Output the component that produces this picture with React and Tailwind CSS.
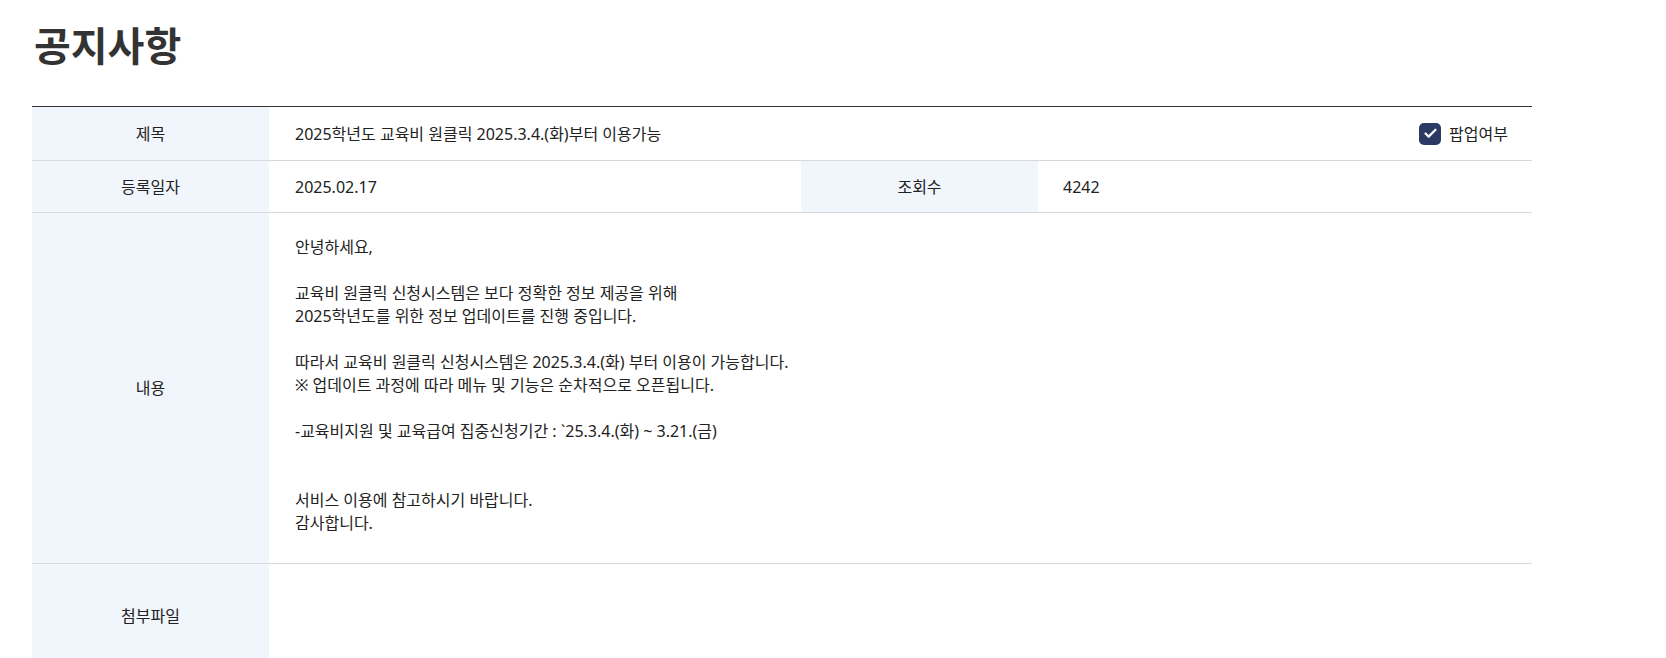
import { Check } from "lucide-react";

const font = { fontFamily: '"Noto Sans", "Noto Sans CJK KR", sans-serif' };

function Th({ children, className = "" }) {
  return (
    <div
      className={`w-[237px] shrink-0 bg-[#f1f5fc] flex items-center justify-center text-[16px] text-[#222] ${className}`}
    >
      {children}
    </div>
  );
}

const body = [
  "안녕하세요,",
  "",
  "교육비 원클릭 신청시스템은 보다 정확한 정보 제공을 위해",
  "2025학년도를 위한 정보 업데이트를 진행 중입니다.",
  "",
  "따라서 교육비 원클릭 신청시스템은 2025.3.4.(화) 부터 이용이 가능합니다.",
  "※ 업데이트 과정에 따라 메뉴 및 기능은 순차적으로 오픈됩니다.",
  "",
  "-교육비지원 및 교육급여 집중신청기간 : `25.3.4.(화) ~ 3.21.(금)",
  "",
  "",
  "서비스 이용에 참고하시기 바랍니다.",
  "감사합니다.",
];

export default function App() {
  return (
    <div className="bg-white min-h-screen pl-8 pt-[20px]" style={font}>
      <h1
        className="text-[40px] leading-[48px] font-bold text-[#333] pl-[2px]"
        style={{ fontFamily: '"Noto Sans CJK KR", sans-serif' }}
      >
        공지사항
      </h1>

      <div className="w-[1500px] mt-[38px] border-t border-[#333] text-[#222]">
        {/* 제목 */}
        <div className="flex h-[54px] border-b border-[#d8d8e0]">
          <Th>제목</Th>
          <div className="flex-1 flex items-center justify-between pl-[26px] pr-[24px] text-[16px]">
            <span>2025학년도 교육비 원클릭 2025.3.4.(화)부터 이용가능</span>
            <label className="flex items-center gap-[8px]">
              <span className="w-[22px] h-[22px] rounded-[5px] bg-[#2b3a63] flex items-center justify-center">
                <Check className="w-[15px] h-[15px] text-white" strokeWidth={3.5} />
              </span>
              <span>팝업여부</span>
            </label>
          </div>
        </div>

        {/* 등록일자 / 조회수 */}
        <div className="flex h-[52px] border-b border-[#d8d8e0]">
          <Th>등록일자</Th>
          <div className="w-[532px] flex items-center pl-[26px] text-[16px]">2025.02.17</div>
          <Th>조회수</Th>
          <div className="flex-1 flex items-center pl-[25px] text-[16px]">4242</div>
        </div>

        {/* 내용 */}
        <div className="flex border-b border-[#d8d8e0]">
          <Th>내용</Th>
          <div className="flex-1 pl-[26px] pt-[23px] pb-[28px] text-[16px] leading-[23px]">
            {body.map((line, i) => (
              <div key={i} className="h-[23px] whitespace-pre">
                {line}
              </div>
            ))}
          </div>
        </div>

        {/* 첨부파일 */}
        <div className="flex h-[104px] border-b border-[#d8d8e0]">
          <Th>첨부파일</Th>
          <div className="flex-1" />
        </div>
      </div>
    </div>
  );
}
